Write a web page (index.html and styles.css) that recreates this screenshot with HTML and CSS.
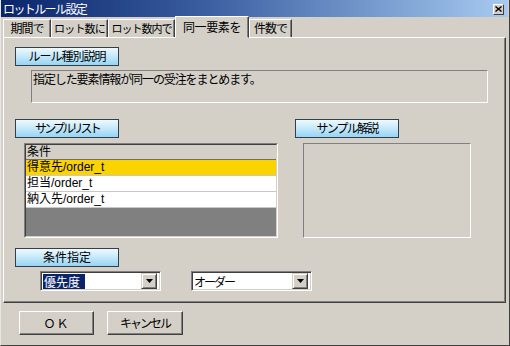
FILE: index.html
```html
<!DOCTYPE html>
<html lang="ja">
<head>
<meta charset="utf-8">
<title>ロットルール設定</title>
<link rel="stylesheet" href="styles.css">
</head>
<body>
<div class="window">
  <div class="titlebar">
    <span class="title">ロットルール設定</span>
    <span class="close">
      <svg width="7" height="6" viewBox="0 0 7 6"><path d="M0.5 0.5 L6.5 5.5 M6.5 0.5 L0.5 5.5" stroke="#000" stroke-width="1.4" fill="none"/></svg>
    </span>
  </div>
  <div class="content">
    <div class="tabs">
      <div class="tab tab-1">期間で</div>
      <div class="tab tab-2">ロット数に</div>
      <div class="tab tab-3">ロット数内で</div>
      <div class="tab tab-active">同一要素を</div>
      <div class="tab tab-5">件数で</div>
    </div>
    <div class="panel">
      <div class="label-btn label-first">ルール種別説明</div>
      <div class="desc">指定した要素情報が同一の受注をまとめます。</div>
      <div class="row">
        <div class="col-left">
          <div class="label-btn label-kana">サンプルリスト</div>
          <div class="list">
            <div class="list-inner">
              <div class="list-head">条件</div>
              <div class="list-row list-row-sel">得意先/order_t</div>
              <div class="list-row">担当/order_t</div>
              <div class="list-row">納入先/order_t</div>
            </div>
          </div>
        </div>
        <div class="col-right">
          <div class="label-btn label-kana2">サンプル解説</div>
          <div class="sample-box"></div>
        </div>
      </div>
      <div class="label-btn label-cond">条件指定</div>
      <div class="combos">
        <div class="combo">
          <span class="combo-text"><span class="selected">優先度</span></span>
          <span class="drop"><svg width="7" height="4" viewBox="0 0 7 4"><path d="M0 0 H7 L3.5 4 Z" fill="#000"/></svg></span>
        </div>
        <div class="combo combo-second">
          <span class="combo-text">オーダー</span>
          <span class="drop"><svg width="7" height="4" viewBox="0 0 7 4"><path d="M0 0 H7 L3.5 4 Z" fill="#000"/></svg></span>
        </div>
      </div>
    </div>
    <div class="footer">
      <div class="btn btn-ok">ＯＫ</div>
      <div class="btn btn-cancel">キャンセル</div>
    </div>
  </div>
</div>
</body>
</html>
```

FILE: styles.css
```css
* { box-sizing: border-box; }
html, body { margin: 0; padding: 0; }
body {
  background: #d4d0c8;
  font-family: "Liberation Sans", "Noto Sans CJK JP", sans-serif;
  font-size: 12px;
  color: #000;
}
.window {
  width: 510px;
  height: 346px;
  background: #d4d0c8;
  border-right: 1px solid #404040;
  border-bottom: 1px solid #404040;
  border-left: 1px solid #e8e6e0;
  overflow: hidden;
}
.titlebar {
  height: 17px;
  background: linear-gradient(to right, #0a246a 0%, #3a5ea0 40%, #a6caf0 100%);
  display: flex;
  align-items: center;
  justify-content: space-between;
  padding: 0 4px 0 2px;
  margin-right: 1px;
}
.title {
  color: #fff;
  font-family: "Noto Sans CJK JP", sans-serif;
  font-size: 12px;
  letter-spacing: -1.6px;
  line-height: 17px;
}
.close {
  width: 11px;
  height: 11px;
  background: #d4d0c8;
  border: 1px solid;
  border-color: #fff #404040 #404040 #fff;
  display: flex;
  align-items: center;
  justify-content: center;
  margin-top: 1px;
}
.content {
  padding: 0 3px 0 2px;
}
.tabs {
  display: flex;
  align-items: flex-end;
  height: 20px;
}
.tab {
  height: 18px;
  border-top: 1px solid #fff;
  border-left: 1px solid #fff;
  border-right: 1px solid #404040;
  box-shadow: inset -1px 0 #808080;
  font-family: "Noto Sans CJK JP", sans-serif;
  font-size: 12px;
  line-height: 16px;
  letter-spacing: -1px;
  text-align: center;
  white-space: nowrap;
  overflow: hidden;
}
.tab-1 { width: 48px; }
.tab-2 { width: 57px; font-size: 11px; letter-spacing: -0.8px; }
.tab-3 { width: 67px; font-size: 11px; letter-spacing: -1px; }
.tab-active {
  width: 74px;
  height: 22px;
  margin-bottom: -1px;
  background: #d4d0c8;
  position: relative;
  z-index: 1;
  line-height: 19px;
  letter-spacing: -0.4px;
  border-bottom: 1px solid #d4d0c8;
}
.tab-5 { width: 43px; }
.panel {
  width: 503px;
  height: 266px;
  border-top: 1px solid #fff;
  border-left: 1px solid #fff;
  border-right: 1px solid #404040;
  border-bottom: 1px solid #404040;
  box-shadow: inset -1px -1px #808080;
  padding-top: 9px;
}
.label-btn {
  width: 104px;
  height: 19px;
  margin-left: 11px;
  border: 1px solid #33404c;
  background: linear-gradient(to bottom, #eef9fe 0%, #c8eafa 45%, #97d4f4 100%);
  font-family: "Noto Sans CJK JP", sans-serif;
  font-size: 12px;
  line-height: 16px;
  text-align: center;
  letter-spacing: -1px;
  white-space: nowrap;
}
.label-kana { letter-spacing: -2.8px; }
.label-kana2 { letter-spacing: -1.8px; }
.desc {
  margin: 4px 0 0 27px;
  width: 457px;
  height: 33px;
  border: 1px solid;
  border-color: #808080 #fff #fff #808080;
  padding: 1px 1px;
  font-family: "Noto Sans CJK JP", sans-serif;
  font-size: 12px;
  line-height: 14px;
  letter-spacing: -1.1px;
}
.row {
  display: flex;
  margin-top: 16px;
}
.col-left { width: 274px; }
.col-right { margin-left: 6px; }
.col-right .label-btn { margin-left: 11px; }
.list {
  margin: 5px 0 0 20px;
  width: 254px;
  height: 95px;
  border: 1px solid;
  border-color: #808080 #fff #fff #808080;
}
.list-inner {
  height: 100%;
  border: 1px solid;
  border-color: #404040 #d4d0c8 #d4d0c8 #404040;
  background: #808080;
}
.list-head {
  height: 15px;
  background: #d4d0c8;
  border-bottom: 1px solid #7a7050;
  padding-left: 1px;
  line-height: 14px;
}
.list-row {
  height: 16px;
  background: #fff;
  border-bottom: 1px solid #c8c8c8;
  padding-left: 1px;
  line-height: 15px;
}
.list-row-sel { background: #fbd300; }
.sample-box {
  margin: 5px 0 0 19px;
  width: 168px;
  height: 95px;
  border: 1px solid;
  border-color: #808080 #fff #fff #808080;
}
.label-cond {
  margin-top: 10px;
  letter-spacing: 0;
}
.combos {
  display: flex;
  margin: 4px 0 0 36px;
  gap: 30px;
}
.combo {
  width: 121px;
  height: 20px;
  border: 1px solid;
  border-color: #808080 #fff #fff #808080;
  background: #fff;
  display: flex;
  align-items: center;
  justify-content: space-between;
  box-shadow: inset 1px 1px #404040, inset -1px -1px #d4d0c8;
  padding: 1px 2px 1px 2px;
}
.combo-text {
  font-family: "Noto Sans CJK JP", sans-serif;
  font-size: 12px;
  line-height: 15px;
  padding-left: 0;
}
.combo-second .combo-text { letter-spacing: -2px; }
.selected {
  background: #0a246a;
  color: #fff;
  padding: 0 5px 0 1px;
  display: inline-block;
  line-height: 15px;
}
.drop {
  width: 16px;
  height: 16px;
  background: #d4d0c8;
  border: 1px solid;
  border-color: #d4d0c8 #404040 #404040 #d4d0c8;
  box-shadow: inset 1px 1px #fff, inset -1px -1px #808080;
  display: flex;
  align-items: center;
  justify-content: center;
  margin-right: 1px;
}
.footer {
  display: flex;
  gap: 13px;
  padding: 8px 0 0 16px;
}
.btn {
  height: 24px;
  background: #d4d0c8;
  border: 1px solid;
  border-color: #fff #404040 #404040 #fff;
  box-shadow: inset -1px -1px #808080;
  font-family: "Noto Sans CJK JP", sans-serif;
  font-size: 12px;
  line-height: 21px;
  text-align: center;
}
.btn-ok { width: 75px; letter-spacing: 1px; }
.btn-cancel { width: 76px; letter-spacing: -2px; }
```
